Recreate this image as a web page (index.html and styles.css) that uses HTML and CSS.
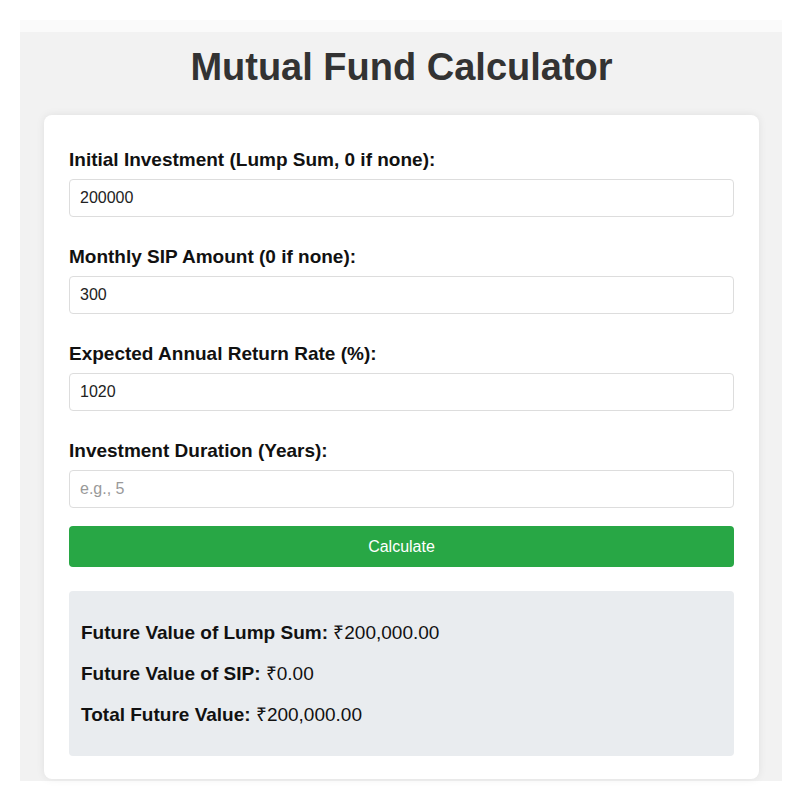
FILE: index.html
```html
<!DOCTYPE html>
<html lang="en">
<head>
  <meta charset="UTF-8" />
  <meta name="viewport" content="width=device-width, initial-scale=1.0" />
  <title>Mutual Fund Calculator</title>
  <link rel="stylesheet" href="styles.css">
</head>
<body>
  <div class="page">
    <h1>Mutual Fund Calculator</h1>
    <div class="calculator">
      <label for="lumpSum">Initial Investment (Lump Sum, 0 if none):</label>
      <input type="number" id="lumpSum" value="200000">

      <label for="sip">Monthly SIP Amount (0 if none):</label>
      <input type="number" id="sip" value="300">

      <label for="rate">Expected Annual Return Rate (%):</label>
      <input type="number" id="rate" value="1020">

      <label for="years">Investment Duration (Years):</label>
      <input type="number" id="years" placeholder="e.g., 5">

      <button type="button">Calculate</button>

      <div class="result">
        <p><strong>Future Value of Lump Sum:</strong> ₹200,000.00</p>
        <p><strong>Future Value of SIP:</strong> ₹0.00</p>
        <p><strong>Total Future Value:</strong> ₹200,000.00</p>
      </div>
    </div>
  </div>
</body>
</html>
```

FILE: styles.css
```css
body {
  margin: 0;
  padding: 20px 18px 20px 20px;
  background: #fff;
  font-family: 'Liberation Sans', Arial, sans-serif;
}
.page {
  background: #f2f2f2;
  border-top: 12px solid #fafafa;
  padding: 0 23px 2px 24px;
}
h1 {
  margin: 0;
  padding: 13px 0 26px;
  text-align: center;
  font-size: 38px;
  line-height: 44px;
  color: #333;
}
.calculator {
  background: #fff;
  border-radius: 8px;
  box-shadow: 0 0 8px rgba(0, 0, 0, 0.08);
  padding: 34px 25px 23px;
  display: flex;
  flex-direction: column;
}
label {
  font-weight: bold;
  font-size: 19px;
  line-height: 22px;
  color: #111;
  margin-bottom: 8px;
}
input {
  height: 38px;
  box-sizing: border-box;
  border: 1px solid #ddd;
  border-radius: 4px;
  padding: 0 10px;
  font-family: inherit;
  font-size: 16px;
  color: #222;
  margin-bottom: 29px;
}
input::placeholder {
  color: #999;
}
input:last-of-type {
  margin-bottom: 18px;
}
button {
  height: 41px;
  border: none;
  border-radius: 4px;
  background: #28a745;
  color: #fff;
  font-family: inherit;
  font-size: 16px;
  margin-bottom: 24px;
}
.result {
  background: #e9ecef;
  border-radius: 4px;
  padding: 21px 12px 21px;
}
.result p {
  margin: 0;
  font-size: 19px;
  line-height: 41px;
  color: #111;
}
```
